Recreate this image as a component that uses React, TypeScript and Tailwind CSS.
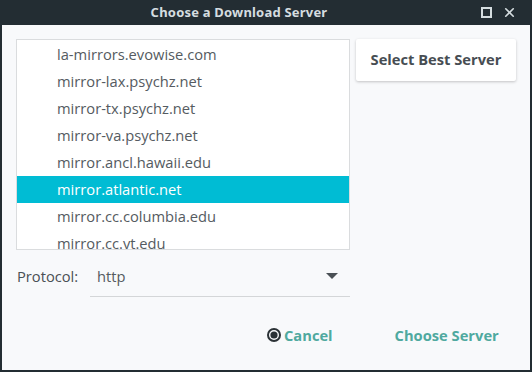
import { X } from "lucide-react";

const servers = [
  "la-mirrors.evowise.com",
  "mirror-lax.psychz.net",
  "mirror-tx.psychz.net",
  "mirror-va.psychz.net",
  "mirror.ancl.hawaii.edu",
  "mirror.atlantic.net",
  "mirror.cc.columbia.edu",
  "mirror.cc.vt.edu",
];

const selected = "mirror.atlantic.net";

export default function App() {
  return (
    <div
      className="w-[532px] h-[372px] bg-[#232d33] flex flex-col"
      style={{ fontFamily: '"Open Sans", "Noto Sans", sans-serif' }}
    >
      {/* title bar */}
      <div className="h-[25px] flex items-center relative">
        <div
          className="flex-1 text-center pr-[54px] text-[13px] font-bold text-[#d5dde0] tracking-[0.2px]"
          style={{ fontFamily: '"Noto Sans", sans-serif' }}
        >
          Choose a Download Server
        </div>
        <div className="absolute right-[15px] top-0 h-[25px] flex items-center gap-[10px]">
          <div className="w-[11px] h-[11px] border-2 border-[#d5dde0]" />
          <X size={15} strokeWidth={2.6} className="text-[#d5dde0]" />
        </div>
      </div>

      {/* body */}
      <div className="flex-1 mx-[2px] mb-[2px] bg-[#f8f9fb] flex flex-col pl-[14px] pt-[14px] pr-[14px]">
        <div className="flex gap-[6px]">
          <div className="w-[334px] h-[211px] border border-[#dadcde] bg-white overflow-hidden pt-px">
            {servers.map((s) => (
              <div
                key={s}
                className={`h-[27px] flex items-center pl-[40px] text-[14.7px] ${
                  s === selected
                    ? "bg-[#00bcd4] text-white"
                    : "text-[#555b61]"
                }`}
              >
                {s}
              </div>
            ))}
          </div>
          <button className="w-[160px] h-[42px] pb-px bg-white rounded-[2px] shadow-[0_1px_3px_rgba(0,0,0,0.22)] text-[14.7px] font-bold text-[#474d53]">
            Select Best Server
          </button>
        </div>

        {/* protocol */}
        <div className="flex items-center mt-[6px] h-[41px]">
          <div className="w-[74px] pl-px text-[14.7px] text-[#4a5055]">Protocol:</div>
          <div className="w-[260px] h-[41px] border-b border-[#d4d6d8] flex items-center pl-[7px] pr-[12px] text-[14.7px] text-[#555b61]">
            <span className="flex-1">http</span>
            <svg width="12" height="7" viewBox="0 0 12 7">
              <path d="M0 0 L12 0 L6 6 Z" fill="#4a5055" />
            </svg>
          </div>
        </div>

        {/* actions */}
        <div className="flex items-center mt-[27px] h-[22px] pl-[251px]">
          <div className="flex items-center gap-[3px]">
            <svg width="14" height="14" viewBox="0 0 14 14">
              <circle cx="7" cy="7" r="6" fill="none" stroke="#2b3236" strokeWidth="2" />
              <circle cx="7" cy="7" r="3.6" fill="#2b3236" />
            </svg>
            <span className="text-[14.7px] font-bold text-[#4fa99f]">Cancel</span>
          </div>
          <span className="ml-[62px] text-[14.7px] font-bold text-[#4fa99f]">Choose Server</span>
        </div>
      </div>
    </div>
  );
}
